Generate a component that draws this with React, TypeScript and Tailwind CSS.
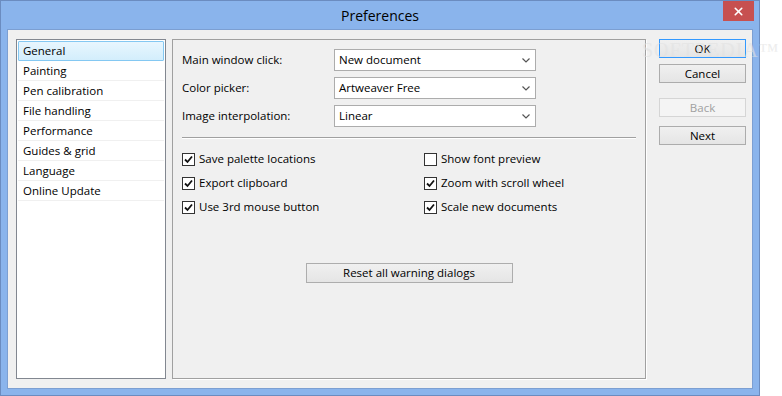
import { X } from "lucide-react";

const pages = [
  "General",
  "Painting",
  "Pen calibration",
  "File handling",
  "Performance",
  "Guides & grid",
  "Language",
  "Online Update",
];

const dropdowns = [
  { label: "Main window click:", value: "New document" },
  { label: "Color picker:", value: "Artweaver Free" },
  { label: "Image interpolation:", value: "Linear" },
];

const options: [string, boolean][][] = [
  [
    ["Save palette locations", true],
    ["Export clipboard", true],
    ["Use 3rd mouse button", true],
  ],
  [
    ["Show font preview", false],
    ["Zoom with scroll wheel", true],
    ["Scale new documents", true],
  ],
];

function Chevron() {
  return (
    <svg width="8" height="5" viewBox="0 0 8 5" className="shrink-0">
      <path d="M0.5 0.5 L4 4 L7.5 0.5" fill="none" stroke="#555" strokeWidth="1.2" />
    </svg>
  );
}

function Checkbox({ label, checked }: { label: string; checked: boolean }) {
  return (
    <div className="flex h-4 items-center gap-[4px]">
      <span className="flex h-[13px] w-[13px] shrink-0 items-center justify-center border border-[#333] bg-white">
        {checked && (
          <svg width="9" height="9" viewBox="0 0 9 9">
            <path d="M1 4.5 L3.5 7 L8 1.5" fill="none" stroke="#111" strokeWidth="1.8" />
          </svg>
        )}
      </span>
      <span>{label}</span>
    </div>
  );
}

function SideButton({ children, variant }: { children: string; variant?: "default" | "disabled" }) {
  return (
    <button
      className={
        variant === "default"
          ? "h-[19px] w-[87px] border border-[#3399ff] bg-gradient-to-b from-[#f0f0f0] to-[#e5e5e5] leading-none text-black"
          : variant === "disabled"
          ? "h-[19px] w-[87px] border border-[#d5d5d5] bg-[#f4f4f4] leading-none text-[#a0a0a0]"
          : "h-[19px] w-[87px] border border-[#acacac] bg-gradient-to-b from-[#f0f0f0] to-[#e5e5e5] leading-none text-black"
      }
    >
      {children}
    </button>
  );
}

export default function App() {
  return (
    <div
      className="relative h-[396px] w-[782px] bg-white text-[11.5px] text-black"
      style={{ fontFamily: '"Open Sans", "Noto Sans", sans-serif' }}
    >
      {/* Window frame */}
      <div className="flex h-[396px] w-[760px] flex-col border border-[#6b8cc0] bg-[#8ab4ec] px-[6px] pb-[6px]">
        {/* Title bar */}
        <div className="relative flex h-[28px] shrink-0 items-center justify-center">
          <span className="text-[14px] text-black">Preferences</span>
          <div className="absolute right-[-1px] top-0 flex h-[20px] w-[31px] items-center justify-center bg-[#c75050]">
            <X size={13} strokeWidth={3} className="text-white" />
          </div>
        </div>

        {/* Client area */}
        <div className="flex min-h-0 flex-1 border border-[#7c9fd2] bg-[#f0f0f0] pb-[9px] pl-[8px] pr-[6px] pt-[9px]">
          {/* Page list */}
          <div className="w-[150px] shrink-0 border border-[#828790] bg-white p-px">
            {pages.map((p, i) =>
              i === 0 ? (
                <div
                  key={p}
                  className="flex h-[20px] items-center rounded-[1px] border border-[#84c8f2] bg-gradient-to-b from-[#e8f6fe] to-[#d3eefc] pl-[4px]"
                >
                  {p}
                </div>
              ) : (
                <div key={p} className="flex h-[20px] items-center border-b border-[#f0f0f0] pl-[5px]">
                  {p}
                </div>
              )
            )}
          </div>

          {/* Settings panel */}
          <div className="ml-[6px] flex w-[474px] shrink-0 flex-col border border-[#a0a0a0] px-[9px] pt-[9px] shadow-[1px_1px_0_#fff]">
            <div className="flex flex-col gap-[6px]">
              {dropdowns.map((d) => (
                <div key={d.label} className="flex h-[22px] items-center">
                  <span className="w-[152px] shrink-0">{d.label}</span>
                  <div className="flex h-[22px] w-[202px] items-center justify-between border border-[#acacac] bg-white pl-[4px] pr-[5px]">
                    <span>{d.value}</span>
                    <Chevron />
                  </div>
                </div>
              ))}
            </div>

            <div className="mt-[10px] h-px bg-[#a0a0a0] shadow-[0_1px_0_#fff]" />

            <div className="mt-[13px] flex">
              {options.map((col, ci) => (
                <div key={ci} className={ci === 0 ? "flex w-[242px] flex-col gap-[8px]" : "flex flex-col gap-[8px]"}>
                  {col.map(([label, checked]) => (
                    <Checkbox key={label} label={label} checked={checked} />
                  ))}
                </div>
              ))}
            </div>

            <div className="mt-[48px] flex justify-center">
              <button className="h-[20px] w-[207px] border border-[#adadad] bg-gradient-to-b from-[#f0f0f0] to-[#e5e5e5] leading-none">
                Reset all warning dialogs
              </button>
            </div>
          </div>

          {/* Dialog buttons */}
          <div className="ml-[13px] flex flex-col">
            <SideButton variant="default">OK</SideButton>
            <div className="mt-[6px]">
              <SideButton>Cancel</SideButton>
            </div>
            <div className="mt-[15px]">
              <SideButton variant="disabled">Back</SideButton>
            </div>
            <div className="mt-[9px]">
              <SideButton>Next</SideButton>
            </div>
          </div>
        </div>
      </div>

      {/* Watermark */}
      <div
        className="pointer-events-none absolute left-[642px] top-[40px] text-[20px] leading-none tracking-[1px] text-[#e2e2e2] opacity-60"
        style={{ fontFamily: '"Liberation Serif", serif' }}
      >
        SOFTPEDIA™
      </div>
    </div>
  );
}
